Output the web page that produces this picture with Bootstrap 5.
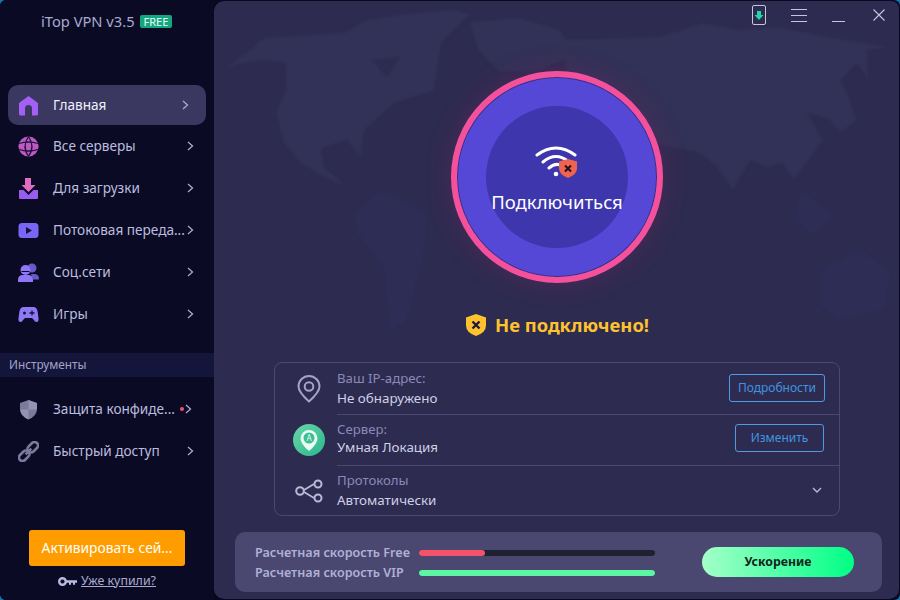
<!DOCTYPE html>
<html lang="ru">

<head>
  <meta charset="UTF-8" />
  <meta name="viewport" content="width=device-width, initial-scale=1.0" />
  <title>iTop VPN</title>
  <link href="https://cdn.jsdelivr.net/npm/bootstrap@5.3.3/dist/css/bootstrap.min.css" rel="stylesheet" />
  <style>
    html, body { height: 100%; }
    body { background: #1279b5; font-family: "Noto Sans", "DejaVu Sans", sans-serif; font-size: 14px; overflow: hidden; }
    .app-shell { width: 900px; height: 600px; background: #08081f; border-radius: 6px; overflow: hidden; }

    .side-panel { width: 214px; flex: none; background: #0a0a25; color: #b9bade; }
    .side-title { height: 42px; padding-left: 41px; font-size: 14.7px; color: #a9aacd; white-space: nowrap; }
    .free-tag { background: #13a67f; color: #e8fff8; font-size: 11px; line-height: 13px; padding: 0 4px; border-radius: 2px; margin-left: 5px; }
    .side-nav { margin-top: 43px; padding: 0 8px; }
    .side-link { height: 40px; margin-bottom: 2px; padding: 0 0 0 10px; color: #bcbddf; border-radius: 10px; font-size: 13.6px; white-space: nowrap; }
    .side-link:first-child { margin-bottom: 1px; }
    .side-link:hover { color: #bcbddf; }
    .side-link.current { background: #3a3860; color: #f1f1fb; }
    .side-ico { width: 21px; height: 21px; flex: none; margin-right: 14px; }
    .side-txt { width: 131px; flex: none; }
    .side-arrow { width: 7px; height: 10px; flex: none; margin-left: 3px; }
    .side-link.current .side-arrow { margin-left: -2px; }
    .tools-head { height: 24px; margin-top: 17px; margin-bottom: 12px; padding-left: 9px; background: #14153a; color: #a3a4c6; font-size: 11.8px; }
    .tools-nav { margin-top: 0; }
    .tools-nav .side-link:first-child { margin-bottom: 2px; }
    .red-dot { width: 4px; height: 4px; border-radius: 50%; background: #f2506e; margin-left: -4px; margin-right: 1px; flex: none; }
    .activate-btn { width: 156px; height: 36px; background: #ff9d00; border: 0; border-radius: 3px; color: #fff; font-size: 13.8px; padding: 0; margin: 0 auto; }
    .bought-link { font-size: 12.4px; color: #a9aacd; height: 30px; margin-bottom: 4px; }
    .bought-link a { color: #a9aacd; }

    .main-panel { width: 686px; height: 598px; margin-top: 1px; background: #2e2b50; border-radius: 10px 8px 10px 10px; box-shadow: inset -1px 0 0 #08081f; overflow: hidden; }
    .map-bg { position: absolute; left: 0; top: 0; width: 686px; height: 400px; filter: blur(1px); }
    .top-tools { height: 28px; padding-right: 15px; gap: 25px; position: relative; }
    .close-ico { margin-left: 3px; }
    .connect-ring { width: 212px; height: 212px; margin: 42px auto 0; border-radius: 50%; background: #5548d6; border: 6px solid #f5509c; box-shadow: inset 0 0 0 1px #3c2f7e, 0 0 26px rgba(150, 40, 110, .28); position: relative; }
    .connect-core { width: 142px; height: 142px; padding-top: 5px; border-radius: 50%; background: #3d36ad; color: #fff; font-size: 18.5px; }
    .status-row { margin-top: 27px; height: 30px; color: #fdc22e; font-size: 18.4px; font-weight: 700; position: relative; }
    .info-box { width: 566px; height: 154px; margin: 22px auto 0; border: 1px solid #4b4971; border-radius: 8px; position: relative; }
    .info-row { height: 51px; }
    .info-ico { width: 32px; margin-left: 18px; margin-right: 12px; flex: none; }
    .info-body { padding-right: 14px; padding-bottom: 2px; }
    .info-row + .info-row .info-body { border-top: 1px solid #4b4971; }
    .info-lbl { color: #8b89b8; font-size: 13.2px; line-height: 20px; }
    .info-val { color: #cfd0e6; font-size: 13.4px; line-height: 20px; }
    .info-tight .info-body { padding-bottom: 4px; }
    .info-tight .info-lbl, .info-tight .info-val { line-height: 18px; }
    .info-btn { height: 28px; font-size: 12px; line-height: 1; color: #3f95e0; border: 1px solid #4d9be0; border-radius: 3px; background: transparent; padding: 0; }
    .info-btn:hover { color: #3f95e0; border-color: #4d9be0; background: transparent; }
    .wide-btn { width: 96px; }
    .change-btn { width: 89px; margin-right: 1px; }
    .proto-arrow { margin-right: 3px; }
    .speed-box { width: 647px; height: 60px; margin: 16px 0 0 21px; background: #4a4770; border-radius: 10px; padding: 0 28px 0 20px; position: relative; }
    .speed-rows { padding-top: 2px; }
    .speed-lbl { width: 164px; color: #b0b0d6; font-size: 12.6px; font-weight: 600; white-space: nowrap; line-height: 20px; }
    .speed-track { width: 236px; height: 6px; background: #1f2030; border-radius: 3px; }
    .speed-fill { height: 6px; border-radius: 3px; }
    .boost-btn { width: 152px; height: 30px; margin-left: 47px; border: 0; border-radius: 15px; padding: 0; background: linear-gradient(90deg, #a4ffc9 0%, #00ff85 100%); color: #10251c; font-size: 12.3px; font-weight: 700; }
  </style>
</head>

<body>
  <div class="app-shell d-flex">
    <aside class="side-panel d-flex flex-column">
      <div class="side-title d-flex align-items-center">iTop VPN v3.5<span class="free-tag">FREE</span></div>

      <nav class="nav flex-column side-nav">
        <a class="nav-link side-link current d-flex align-items-center" href="#">
          <svg class="side-ico" viewBox="0 0 21 21"><path d="M10.500 1 20 8v11a1.500 1.500 0 0 1-1.500 1.500H14v-7a3.500 3.500 0 0 0-7 0v7H2.500A1.500 1.500 0 0 1 1 19V8z" fill="#a45ff5"/></svg>
          <span class="side-txt">Главная</span>
          <svg class="side-arrow" viewBox="0 0 7 10"><path d="M1 1l4.500 4L1 9" fill="none" stroke="#a9aacd" stroke-width="1.300"/></svg>
        </a>
        <a class="nav-link side-link d-flex align-items-center" href="#">
          <svg class="side-ico" viewBox="0 0 21 21"><circle cx="10.500" cy="10.500" r="10" fill="#a45bd8"/><circle cx="10.500" cy="10.500" r="10" fill="#e056a8" opacity=".45"/><path d="M1 7.500q9.500-3 19 0M1 13.500q9.500 3 19 0M10.500.500q-7 10 0 20M10.500.500q7 10 0 20" fill="none" stroke="#1c1540" stroke-width="1.300"/></svg>
          <span class="side-txt">Все серверы</span>
          <svg class="side-arrow" viewBox="0 0 7 10"><path d="M1 1l4.500 4L1 9" fill="none" stroke="#a9aacd" stroke-width="1.300"/></svg>
        </a>
        <a class="nav-link side-link d-flex align-items-center" href="#">
          <svg class="side-ico" viewBox="0 0 21 21"><path d="M7 0h6v7h4.500l-7 7-7-7H7z" fill="#e06bc0"/><path d="M1 12h4.500l5 5 5-5H20v8a1 1 0 0 1-1 1H2a1 1 0 0 1-1-1z" fill="#9a5cf0"/></svg>
          <span class="side-txt">Для загрузки</span>
          <svg class="side-arrow" viewBox="0 0 7 10"><path d="M1 1l4.500 4L1 9" fill="none" stroke="#a9aacd" stroke-width="1.300"/></svg>
        </a>
        <a class="nav-link side-link d-flex align-items-center" href="#">
          <svg class="side-ico" viewBox="0 0 21 21"><rect x=".5" y="3" width="20" height="15" rx="3.500" fill="#7a66f5"/><path d="M8 7l6 3.500L8 14z" fill="#14123a"/></svg>
          <span class="side-txt">Потоковая переда...</span>
          <svg class="side-arrow" viewBox="0 0 7 10"><path d="M1 1l4.500 4L1 9" fill="none" stroke="#a9aacd" stroke-width="1.300"/></svg>
        </a>
        <a class="nav-link side-link d-flex align-items-center" href="#">
          <svg class="side-ico" viewBox="0 0 21 21"><circle cx="14" cy="6" r="4.500" fill="#6a58c8"/><path d="M13 12h3q5 0 5 4.500v1h-6z" fill="#6a58c8"/><circle cx="7.500" cy="8" r="5" fill="#8f78f5"/><path d="M0 20v-2q0-5 5-5h5q5 0 5 5v2z" fill="#8f78f5"/><path d="M3.500 9.500h8" stroke="#0a0a25" stroke-width="1"/></svg>
          <span class="side-txt">Соц.сети</span>
          <svg class="side-arrow" viewBox="0 0 7 10"><path d="M1 1l4.500 4L1 9" fill="none" stroke="#a9aacd" stroke-width="1.300"/></svg>
        </a>
        <a class="nav-link side-link d-flex align-items-center" href="#">
          <svg class="side-ico" viewBox="0 0 21 21"><path d="M5.500 3h10q3 0 4 4l1 7q.5 4-2 4-1.500 0-3-2.500L14 14H7l-1.500 1.500Q4 18 2.500 18q-2.500 0-2-4l1-7q1-4 4-4z" fill="#8f78f5"/><circle cx="6.500" cy="9" r="1.500" fill="#14123a"/><path d="M14 6.500v5M11.500 9h5" stroke="#14123a" stroke-width="1.300"/></svg>
          <span class="side-txt">Игры</span>
          <svg class="side-arrow" viewBox="0 0 7 10"><path d="M1 1l4.500 4L1 9" fill="none" stroke="#a9aacd" stroke-width="1.300"/></svg>
        </a>
      </nav>

      <div class="tools-head d-flex align-items-center">Инструменты</div>

      <nav class="nav flex-column side-nav tools-nav">
        <a class="nav-link side-link d-flex align-items-center" href="#">
          <svg class="side-ico" viewBox="0 0 21 21"><path d="M10.500 1 19 4v6q0 7-8.500 10.500Q2 17 2 10V4z" fill="#7b7a9c"/><path d="M10.500 1v9.500H19V4zM10.500 10.500V20.500Q3 17 2 10.500z" fill="#a9a9c4" opacity=".55"/></svg>
          <span class="side-txt">Защита конфиде...</span>
          <span class="red-dot"></span>
          <svg class="side-arrow ms-0" viewBox="0 0 7 10"><path d="M1 1l4.500 4L1 9" fill="none" stroke="#a9aacd" stroke-width="1.300"/></svg>
        </a>
        <a class="nav-link side-link d-flex align-items-center" href="#">
          <svg class="side-ico" viewBox="0 0 21 21"><g fill="none" stroke="#7b7a9c" stroke-width="2.600" transform="rotate(-45 10.500 10.500)"><rect x="-1.500" y="7" width="12" height="7" rx="3.500"/><rect x="10.500" y="7" width="12" height="7" rx="3.500"/><path d="M6.500 10.500h8"/></g></svg>
          <span class="side-txt">Быстрый доступ</span>
          <svg class="side-arrow" viewBox="0 0 7 10"><path d="M1 1l4.500 4L1 9" fill="none" stroke="#a9aacd" stroke-width="1.300"/></svg>
        </a>
      </nav>

      <div class="mt-auto d-flex flex-column">
        <button class="btn activate-btn" type="button">Активировать сей...</button>
        <div class="bought-link d-flex align-items-center justify-content-center gap-1">
          <svg width="19" height="9" viewBox="0 0 19 9"><circle cx="4.500" cy="4.500" r="3.300" fill="none" stroke="#b9bade" stroke-width="2.400"/><path d="M8 3.300h11v2.400h-2v2h-2v-2h-2v2h-2v-2H8z" fill="#b9bade"/></svg>
          <a href="#">Уже купили?</a>
        </div>
      </div>
    </aside>

    <main class="main-panel position-relative">
      <!-- карта: координаты как на экране, viewBox сдвинут на начало панели -->
      <svg class="map-bg" viewBox="214 1 686 400">
        <g fill="#323157">
          <path d="M224 70L241 57 264 38 344 33 367 20 414 13 454 10 470 14 441 43 434 90 394 103 364 130 361 157 347 140 321 150 324 167 347 187 324 177 301 163 284 143 276 113 286 90 286 63 267 60 241 63z"/>
          <path d="M470 22L520 18 560 30 575 55 540 70 500 72 478 50z"/>
          <path d="M560 40L660 37 703 23 740 30 777 27 827 37 890 47 867 50 868 80 857 63 840 80 847 93 857 120 840 133 830 120 807 113 823 140 803 167 793 180 783 163 767 167 750 160 733 190 717 167 700 153 670 147 640 140 600 120 570 90z"/>
        </g>
        <g fill="#2e2b50">
          <path d="M371 60L400 57 387 77z"/>
          <path d="M322 148L345 140 352 155 332 165z"/>
        </g>
        <g fill="#2d2d56">
          <path d="M354 213L381 190 427 213 424 253 407 320 390 333 384 267 357 233z"/>
          <path d="M820 270L860 250 890 270 885 310 840 320 820 305z"/>
          <path d="M800 190L835 215 815 235 795 220z"/>
        </g>
      </svg>

      <div class="top-tools d-flex justify-content-end align-items-center">
        <svg width="14" height="20" viewBox="0 0 14 20"><rect x=".5" y=".5" width="13" height="19" rx="1.500" fill="none" stroke="#c5c6dc"/><path d="M5 6h4v4h2.500L7 15 2.500 10H5z" fill="#1fd6a5"/></svg>
        <svg width="16" height="14" viewBox="0 0 16 14"><path d="M0 1.500h16M0 7.500h16M0 13.500h16" stroke="#c5c6dc"/></svg>
        <svg width="13" height="14" viewBox="0 0 13 14"><path d="M0 13.500h13" stroke="#c5c6dc"/></svg>
        <svg class="close-ico" width="12" height="12" viewBox="0 0 12 12"><path d="M.5.500l11 11M11.500.500l-11 11" stroke="#c5c6dc" stroke-width="1.100"/></svg>
      </div>

      <div class="connect-ring d-flex align-items-center justify-content-center">
        <div class="connect-core d-flex flex-column align-items-center justify-content-center">
          <svg width="44" height="36" viewBox="0 0 44 36">
            <path d="M2 11Q21-3 40 11M8 18Q21 7 34 18M14 24Q21 18 27 22" fill="none" stroke="#fff" stroke-width="3" stroke-linecap="round"/>
            <circle cx="21" cy="30" r="2.300" fill="#fff"/>
            <path d="M33 15l9 2.500v7q0 6-9 9.500-9-3.500-9-9.500v-7z" fill="#f0634f"/>
            <path d="M30 21.500l6 6M36 21.500l-6 6" stroke="#1a1020" stroke-width="2"/>
          </svg>
          <div class="mt-2">Подключиться</div>
        </div>
      </div>

      <div class="status-row d-flex align-items-center justify-content-center gap-2">
        <svg width="22" height="24" viewBox="0 0 22 24"><path d="M11 1l10 3.500v8q0 7-10 10.500Q1 19.500 1 12.500v-8z" fill="#fdc22e"/><path d="M7.500 8.500l7 7M14.500 8.500l-7 7" stroke="#1f1b3c" stroke-width="2.400"/></svg>
        <span>Не подключено!</span>
      </div>

      <div class="info-box">
        <div class="info-row d-flex align-items-stretch">
          <div class="info-ico d-flex align-items-center justify-content-center">
            <svg width="24" height="28" viewBox="0 0 24 28"><path d="M12 26.500Q1.500 17 1.500 11.500a10.500 10.500 0 0 1 21 0Q22.500 17 12 26.500z" fill="none" stroke="#a5a4c8" stroke-width="2"/><circle cx="12" cy="11.500" r="4.300" fill="none" stroke="#a5a4c8" stroke-width="2"/></svg>
          </div>
          <div class="info-body flex-grow-1 d-flex align-items-center justify-content-between">
            <div>
              <div class="info-lbl">Ваш IP-адрес:</div>
              <div class="info-val">Не обнаружено</div>
            </div>
            <button class="btn info-btn wide-btn" type="button">Подробности</button>
          </div>
        </div>
        <div class="info-row info-tight d-flex align-items-stretch">
          <div class="info-ico d-flex align-items-center justify-content-center">
            <svg width="32" height="32" viewBox="0 0 32 32"><defs><linearGradient id="srv" x1="0" y1="0" x2="1" y2="1"><stop offset="0" stop-color="#67d6a7"/><stop offset="1" stop-color="#2ab88f"/></linearGradient></defs><circle cx="16" cy="16" r="16" fill="url(#srv)"/><path d="M16 27q-8.500-7-8.500-12.500a8.500 8.500 0 0 1 17 0Q24.500 20 16 27z" fill="#e9fbf3"/><circle cx="16" cy="14" r="5.500" fill="#3dbd96"/><text x="16" y="17" font-size="8" fill="#e9fbf3" text-anchor="middle" font-family="Noto Sans">A</text></svg>
          </div>
          <div class="info-body flex-grow-1 d-flex align-items-center justify-content-between">
            <div>
              <div class="info-lbl">Сервер:</div>
              <div class="info-val">Умная Локация</div>
            </div>
            <button class="btn info-btn change-btn" type="button">Изменить</button>
          </div>
        </div>
        <div class="info-row d-flex align-items-stretch">
          <div class="info-ico d-flex align-items-center justify-content-center">
            <svg width="28" height="24" viewBox="0 0 28 24"><circle cx="5" cy="12" r="3.800" fill="none" stroke="#b9b9d6" stroke-width="2"/><circle cx="23" cy="5" r="3.500" fill="none" stroke="#b9b9d6" stroke-width="2"/><circle cx="23" cy="19" r="3.500" fill="none" stroke="#b9b9d6" stroke-width="2"/><path d="M9 11l10-6M9 13l10 6" stroke="#b9b9d6" stroke-width="1.800"/></svg>
          </div>
          <div class="info-body flex-grow-1 d-flex align-items-center justify-content-between">
            <div>
              <div class="info-lbl">Протоколы</div>
              <div class="info-val">Автоматически</div>
            </div>
            <svg class="proto-arrow" width="10" height="7" viewBox="0 0 10 7"><path d="M1 1l4 4 4-4" fill="none" stroke="#b9b9d6" stroke-width="1.400"/></svg>
          </div>
        </div>
      </div>

      <div class="speed-box d-flex align-items-center">
        <div class="speed-rows">
          <div class="d-flex align-items-center">
            <div class="speed-lbl">Расчетная скорость Free</div>
            <div class="speed-track"><div class="speed-fill" style="width: 28%; background: #f3526a"></div></div>
          </div>
          <div class="d-flex align-items-center">
            <div class="speed-lbl">Расчетная скорость VIP</div>
            <div class="speed-track"><div class="speed-fill" style="width: 100%; background: #5cf5a4"></div></div>
          </div>
        </div>
        <button class="btn boost-btn" type="button">Ускорение</button>
      </div>
    </main>
  </div>

  <script src="https://cdn.jsdelivr.net/npm/bootstrap@5.3.3/dist/js/bootstrap.bundle.min.js"></script>
</body>

</html>
